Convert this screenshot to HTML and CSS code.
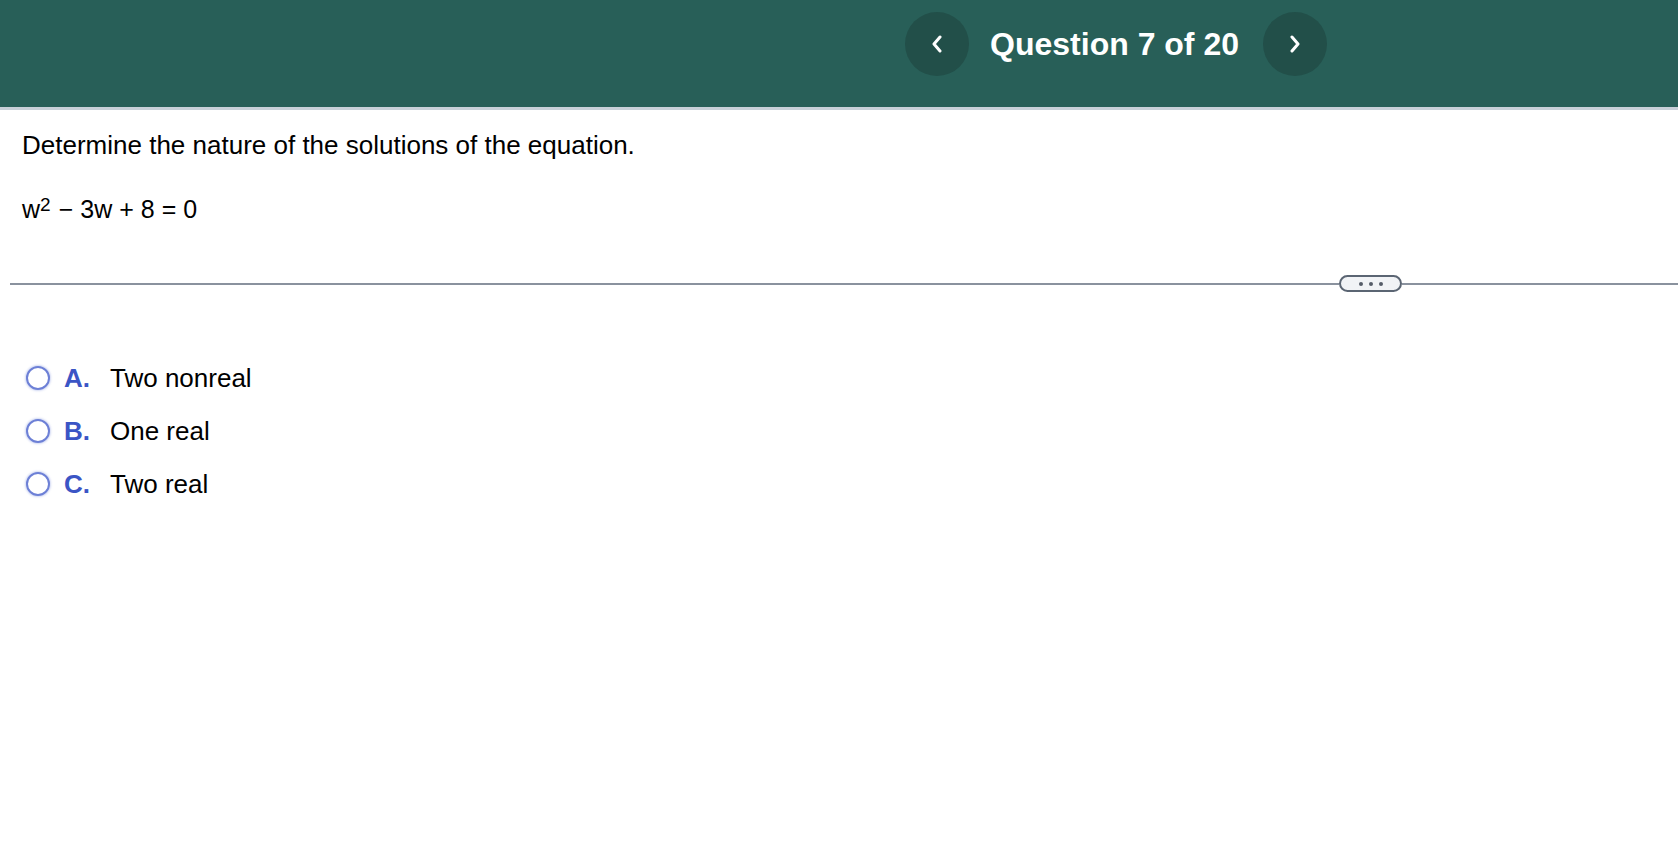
FILE: index.html
```html
<!DOCTYPE html>
<html lang="en">
<head>
<meta charset="utf-8">
<title>Question 7 of 20</title>
<link rel="stylesheet" href="styles.css">
</head>
<body>
<header class="topbar">
  <nav class="qnav">
    <button class="navbtn" aria-label="Previous question">
      <svg width="12" height="18" viewBox="0 0 12 18"><path d="M9 2 L3 9 L9 16" fill="none" stroke="#fff" stroke-width="3" stroke-linecap="round" stroke-linejoin="round"/></svg>
    </button>
    <h1 class="qtitle">Question 7 of 20</h1>
    <button class="navbtn" aria-label="Next question">
      <svg width="12" height="18" viewBox="0 0 12 18"><path d="M3 2 L9 9 L3 16" fill="none" stroke="#fff" stroke-width="3" stroke-linecap="round" stroke-linejoin="round"/></svg>
    </button>
  </nav>
</header>
<main class="content">
  <p class="prompt">Determine the nature of the solutions of the equation.</p>
  <p class="equation"><span class="var">w</span><sup class="exp">2</sup><span class="op">−</span>3w<span class="op">+</span>8<span class="op">=</span>0</p>
  <div class="divider">
    <span class="rule"></span>
    <span class="pill"><i></i><i></i><i></i></span>
    <span class="rule"></span>
  </div>
  <ul class="choices">
    <li class="choice"><span class="radio"></span><span class="letter">A.</span><span class="label">Two nonreal</span></li>
    <li class="choice"><span class="radio"></span><span class="letter">B.</span><span class="label">One real</span></li>
    <li class="choice"><span class="radio"></span><span class="letter">C.</span><span class="label">Two real</span></li>
  </ul>
</main>
</body>
</html>
```
FILE: styles.css
```css
* { box-sizing: border-box; }
html, body { margin: 0; padding: 0; background: #fff; }
body { font-family: "Liberation Sans", Arial, Helvetica, sans-serif; color: #000; }

.topbar {
  height: 110px;
  background: #285f58;
  border-bottom: 3px solid #c8d0d8;
  display: flex;
  justify-content: flex-end;
  padding-right: 351px;
  padding-top: 12px;
}
.qnav {
  display: flex;
  align-items: center;
  height: 64px;
}
.navbtn {
  width: 64px;
  height: 64px;
  border: 0;
  border-radius: 50%;
  background: #224f49;
  display: flex;
  align-items: center;
  justify-content: center;
  padding: 0;
  cursor: pointer;
}
.qtitle {
  margin: 0 24px 0 21px;
  font-size: 32px;
  font-weight: bold;
  color: #fff;
  letter-spacing: 0;
}

.content { padding: 0 0 0 10px; }
.prompt {
  margin: 20px 0 0 12px;
  font-size: 26px;
  line-height: 30px;
}
.equation {
  margin: 34px 0 0 12px;
  font-size: 25px;
  line-height: 30px;
}
.exp { font-size: 19px; vertical-align: 0; position: relative; top: -7px; margin-right: 1px; }
.op { margin: 0 7px; }

.divider {
  margin-top: 48px;
  display: flex;
  align-items: center;
  height: 17px;
}
.rule { height: 2px; background: #8a929e; }
.rule:first-child { width: 1329px; }
.rule:last-child { flex: 1; }
.pill {
  width: 63px;
  height: 17px;
  border: 2px solid #5b6573;
  border-radius: 9px;
  background: #f1f3f6;
  display: flex;
  align-items: center;
  justify-content: center;
  gap: 6px;
}
.pill i { width: 4px; height: 4px; border-radius: 50%; background: #555d68; }

.choices {
  list-style: none;
  margin: 71px 0 0 0;
  padding: 0 0 0 16px;
  display: flex;
  flex-direction: column;
  gap: 23px;
}
.choice {
  display: flex;
  align-items: center;
  height: 30px;
  font-size: 26px;
}
.radio {
  width: 24px;
  height: 24px;
  border: 2px solid #6d80d6;
  border-radius: 50%;
  box-shadow: 0 0 2px 1px rgba(120, 140, 220, 0.35);
  background: #fff;
}
.letter {
  margin-left: 14px;
  width: 46px;
  font-weight: bold;
  color: #3b55c5;
}
.label { color: #000; }
```
